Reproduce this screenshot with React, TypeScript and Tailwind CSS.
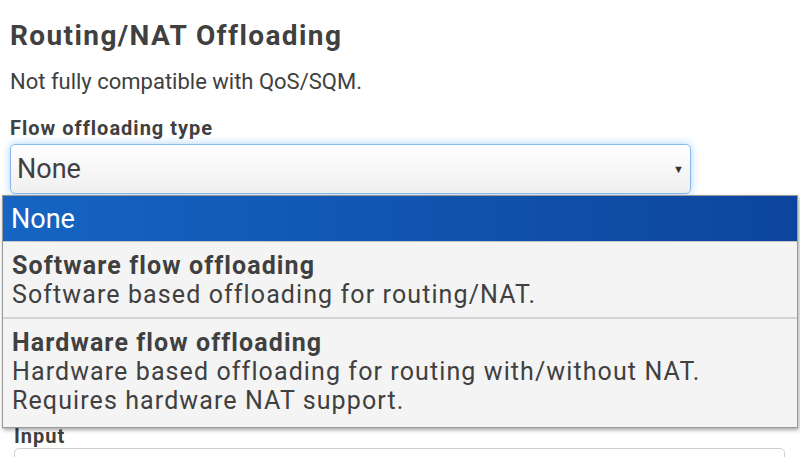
import React from 'react';

const options = [
    {
        title: "Software flow offloading",
        lines: ["Software based offloading for routing/NAT."]
    },
    {
        title: "Hardware flow offloading",
        lines: [
            "Hardware based offloading for routing with/without NAT.",
            "Requires hardware NAT support."
        ]
    }
]

const App = () => {
    return (
        <div className="relative w-[800px] h-[457px] overflow-hidden bg-white text-[#404040] font-['Roboto',sans-serif]">
            <div className="pl-[10px] pt-[20px]">
                {/* Section heading */}
                <h2 className="text-[28px] leading-[32px] font-bold tracking-[1.4px]">Routing/NAT Offloading</h2>
                <p className="mt-[18px] text-[22px] leading-[24px]">Not fully compatible with QoS/SQM.</p>

                <label className="block mt-[23px] text-[20px] leading-[22px] font-bold tracking-[1px]">Flow offloading type</label>
                <div className="mt-[5px] w-[681px] h-[50px] flex items-center justify-between pl-[6px] pr-[6px] rounded-[5px] border border-[#86b9ee] bg-gradient-to-b from-white to-[#efefef] shadow-[0_0_8px_rgba(102,175,233,0.55)]">
                    <span className="text-[27px] leading-[30px]">None</span>
                    <span className="text-[11px] leading-none text-[#333]">▼</span>
                </div>

                <div className="mt-[231px] pl-[4px]">
                    <label className="block text-[20px] leading-[22px] font-bold tracking-[1px]">Input</label>
                    <div className="mt-[1px] w-[771px] h-[40px] rounded-[5px] border border-[#cfcfcf] bg-white"></div>
                </div>
            </div>

            {/* Open dropdown list */}
            <div className="absolute left-[2px] top-[195px] w-[796px] border border-[#9a9a9a] bg-[#f4f4f4] shadow-[1px_2px_4px_rgba(0,0,0,0.35)]">
                <div className="h-[46px] flex items-center pl-[8px] bg-gradient-to-r from-[#1565c2] to-[#0d459e] border-b border-[#c4c4c4]">
                    <span className="text-[27px] leading-[30px] text-white">None</span>
                </div>
                {options.map((opt, i) => (
                    <div
                        key={opt.title}
                        className={`pl-[9px] pt-[9px] text-[25px] leading-[29px] tracking-[1.1px] ${i === 0 ? "pb-[8px] border-b-2 border-[#d4d4d4]" : "pb-[12px]"}`}
                    >
                        <div className="font-bold">{opt.title}</div>
                        {opt.lines.map(line => (
                            <div key={line}>{line}</div>
                        ))}
                    </div>
                ))}
            </div>
        </div>
    )
}

export default App
